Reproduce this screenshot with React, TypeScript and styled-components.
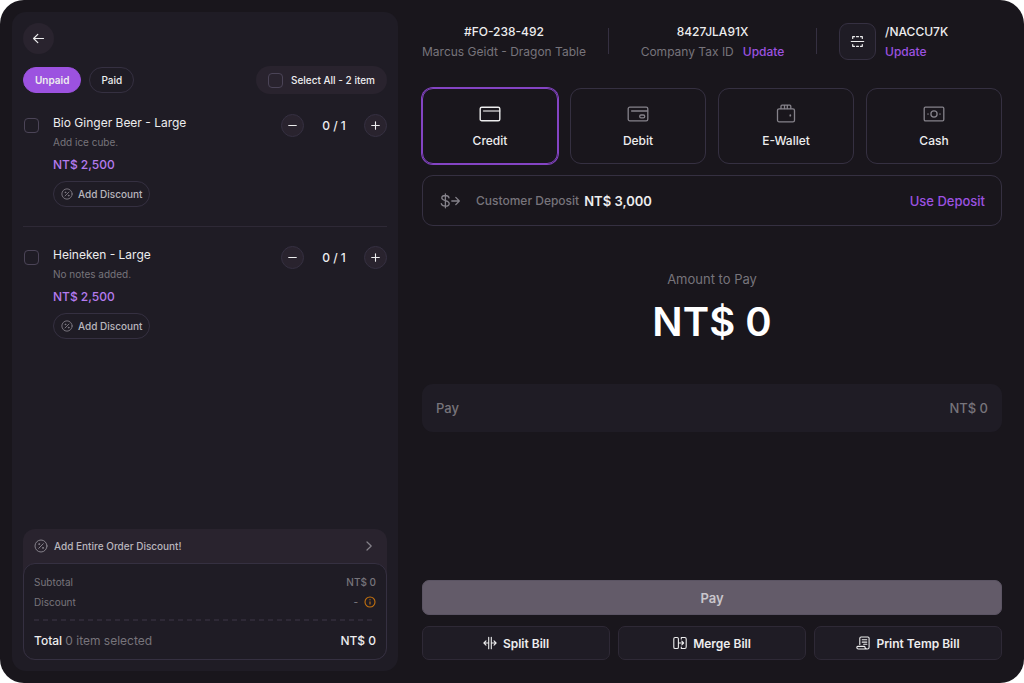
import React, { useState } from "react";
import styled, { createGlobalStyle, css } from "styled-components";

const color = {
  page: "#19161c",
  panel: "#1f1c25",
  raised: "#29232e",
  line: "#353041",
  lineSoft: "#2e2936",
  purple: "#9c52e0",
  purpleDeep: "#8444c4",
  lilac: "#b57bed",
  text: "#ededee",
  soft: "#b9b6bd",
  muted: "#77747b",
  icon: "#85828a",
  amber: "#c5720f",
};

const GlobalStyle = createGlobalStyle`
  *, *::before, *::after { box-sizing: border-box; }
  body { margin: 0; background: #fff; }
  body, button, input { font-family: Inter, "Liberation Sans", sans-serif; }
  button { margin: 0; padding: 0; border: 0; background: none; color: inherit; cursor: pointer; }
  h1, h2, p, ul, dl, dd { margin: 0; padding: 0; font-weight: 400; }
  ul { list-style: none; }
`;

const Screen = styled.div`
  display: grid;
  grid-template-columns: 386fr 580fr;
  gap: 24px;
  min-height: 100vh;
  padding: 12px 22px 12px 12px;
  border-radius: 24px;
  background: ${color.page};
  color: ${color.text};
  font-size: 12px;
  line-height: 16px;
`;

const OrderPanel = styled.section`
  display: flex;
  flex-direction: column;
  min-width: 0;
  padding: 11px;
  border-radius: 14px;
  background: ${color.panel};
`;

const BackButton = styled.button`
  display: grid;
  place-items: center;
  width: 31px;
  height: 31px;
  border-radius: 50%;
  background: ${color.raised};
`;

const FilterRow = styled.div`
  display: flex;
  align-items: center;
  gap: 8px;
  margin-top: 12px;
`;

const FilterTab = styled.button<{ $active?: boolean }>`
  height: 26px;
  padding: 0 11px;
  border: 1px solid ${(p) => (p.$active ? color.purple : color.line)};
  border-radius: 13px;
  background: ${(p) => (p.$active ? color.purple : "transparent")};
  color: ${color.text};
  font-size: 10px;
  font-weight: ${(p) => (p.$active ? 600 : 500)};
`;

const SelectAll = styled.label`
  display: flex;
  align-items: center;
  gap: 8px;
  height: 28px;
  margin-left: auto;
  padding: 0 12px;
  border-radius: 14px;
  background: ${color.raised};
  font-size: 10px;
  font-weight: 500;
`;

const Checkbox = styled.input.attrs({ type: "checkbox" })`
  appearance: none;
  flex: none;
  width: 15px;
  height: 15px;
  margin: 0;
  border: 1px solid #4b4457;
  border-radius: 4px;
  &:checked { background: ${color.purple}; }
`;

const Items = styled.ul`
  display: flex;
  flex-direction: column;
  margin-top: 20px;
`;

const Item = styled.li`
  display: grid;
  grid-template-columns: 16px 1fr auto;
  column-gap: 14px;
  align-items: start;
  & + & {
    margin-top: 19px;
    padding-top: 19px;
    border-top: 1px solid ${color.lineSoft};
  }
`;

const ItemCheck = styled(Checkbox)`
  margin: 4px 0 0 1px;
`;

const ItemInfo = styled.div`
  display: flex;
  flex-direction: column;
  align-items: flex-start;
`;

const ItemName = styled.label`
  line-height: 18px;
`;

const ItemNote = styled.p`
  margin-top: 2px;
  color: ${color.muted};
  font-size: 10px;
`;

const ItemPrice = styled.p`
  margin-top: 7px;
  color: ${color.lilac};
  font-weight: 500;
`;

const DiscountButton = styled.button`
  display: flex;
  align-items: center;
  gap: 5px;
  height: 26px;
  margin-top: 8px;
  padding: 0 7px;
  border: 1px solid ${color.line};
  border-radius: 13px;
  color: ${color.soft};
  font-size: 10px;
  font-weight: 500;
`;

const Stepper = styled.div`
  display: grid;
  grid-template-columns: 23px 60px 23px;
  align-items: center;
  justify-items: center;
  font-weight: 500;
`;

const StepButton = styled.button`
  display: grid;
  place-items: center;
  width: 23px;
  height: 23px;
  border: 1px solid ${color.line};
  border-radius: 50%;
  background: ${color.raised};
`;

const Summary = styled.div`
  margin-top: auto;
  border-radius: 12px;
  background: ${color.raised};
`;

const OrderDiscount = styled.button`
  display: flex;
  align-items: center;
  gap: 6px;
  width: 100%;
  height: 34px;
  padding: 0 12px 0 11px;
  color: ${color.soft};
  font-size: 10px;
  font-weight: 500;
  & > svg:last-child { margin-left: auto; color: ${color.icon}; }
`;

const Totals = styled.dl`
  padding: 10px;
  border: 1px solid ${color.line};
  border-radius: 12px;
  background: ${color.panel};
`;

const TotalRow = styled.div<{ $grand?: boolean }>`
  display: flex;
  align-items: center;
  justify-content: space-between;
  color: ${(p) => (p.$grand ? color.text : color.muted)};
  font-size: ${(p) => (p.$grand ? "12px" : "10px")};
  font-weight: ${(p) => (p.$grand ? 500 : 400)};
  & + & { margin-top: 4px; }
  dd { display: flex; align-items: center; gap: 6px; font-weight: 500; }
`;

const Muted = styled.span`
  color: ${color.muted};
  font-weight: 400;
`;

const Dashes = styled.div`
  height: 2px;
  margin: 9px 0 12px;
  background: repeating-linear-gradient(90deg, ${color.lineSoft} 0 5px, transparent 5px 9px);
`;

const PaymentPanel = styled.main`
  display: flex;
  flex-direction: column;
  min-width: 0;
  padding: 11px 0;
`;

const Facts = styled.header`
  display: grid;
  grid-template-columns: 186fr 209fr 185fr;
  align-items: center;
`;

const Fact = styled.div`
  display: flex;
  align-items: center;
  height: 37px;
`;

const MiddleFact = styled(Fact)`
  position: relative;
  justify-content: center;
  &::before, &::after {
    content: "";
    position: absolute;
    top: 5px;
    width: 1px;
    height: 26px;
    background: ${color.line};
  }
  &::before { left: 0; }
  &::after { right: 0; }
`;

const LastFact = styled(Fact)`
  gap: 9px;
  padding-left: 22px;
`;

const FactText = styled.div<{ $start?: boolean }>`
  display: flex;
  flex-direction: column;
  gap: 4px;
  text-align: ${(p) => (p.$start ? "left" : "center")};
  white-space: nowrap;
`;

const FactTitle = styled.p`
  font-weight: 500;
`;

const FactLine = styled.p`
  display: flex;
  gap: 9px;
  color: ${color.muted};
`;

const TextLink = styled.a`
  color: ${color.purple};
  font-weight: 500;
  text-decoration: none;
`;

const ScanButton = styled.button`
  display: grid;
  place-items: center;
  width: 37px;
  height: 37px;
  border: 1px solid ${color.line};
  border-radius: 9px;
  background: ${color.panel};
`;

const Methods = styled.div`
  display: grid;
  grid-template-columns: repeat(4, 1fr);
  gap: 12px;
  margin-top: 28px;
`;

const Method = styled.button<{ $active?: boolean }>`
  display: flex;
  flex-direction: column;
  align-items: center;
  justify-content: center;
  gap: 8px;
  height: 76px;
  border: 1px solid ${color.line};
  border-radius: 11px;
  color: ${color.text};
  font-size: 12px;
  font-weight: 500;
  line-height: 16px;
  svg { color: ${color.icon}; }
  ${(p) =>
    p.$active &&
    css`
      border-color: ${color.purpleDeep};
      box-shadow: 0 0 0 1px ${color.purpleDeep};
      svg { color: ${color.text}; }
    `}
`;

const Deposit = styled.div`
  display: flex;
  align-items: center;
  height: 51px;
  margin-top: 11px;
  padding: 0 16px 0 17px;
  border: 1px solid ${color.line};
  border-radius: 11px;
  & > svg { color: ${color.icon}; }
`;

const DepositLabel = styled.span`
  margin: 0 5px 0 14px;
  color: ${color.muted};
  font-weight: 500;
`;

const DepositValue = styled.span`
  font-size: 13px;
  font-weight: 600;
`;

const DepositAction = styled.button`
  margin-left: auto;
  color: ${color.purple};
  font-size: 13px;
  font-weight: 500;
`;

const Amount = styled.div`
  margin-top: 45px;
  color: ${color.muted};
  font-size: 13px;
  text-align: center;
`;

const AmountValue = styled.p`
  margin-top: 10px;
  color: #fff;
  font-size: 40px;
  font-weight: 600;
  line-height: 50px;
`;

const PayField = styled.label`
  display: flex;
  align-items: center;
  justify-content: space-between;
  height: 48px;
  margin-top: 37px;
  padding: 0 14px;
  border-radius: 11px;
  background: ${color.panel};
  color: ${color.muted};
  font-size: 13px;
  font-weight: 500;
`;

const PayInput = styled.input`
  flex: 1;
  min-width: 0;
  padding: 0;
  border: 0;
  outline: 0;
  background: none;
  color: inherit;
  font-size: 13px;
  font-weight: 500;
  text-align: right;
`;

const PayButton = styled.button`
  height: 35px;
  margin-top: auto;
  border: 1px solid #5b5463;
  border-radius: 7px;
  background: #635b69;
  color: #c9c6cc;
  font-size: 13px;
  font-weight: 600;
`;

const BillActions = styled.div`
  display: grid;
  grid-template-columns: repeat(3, 1fr);
  gap: 8px;
  margin-top: 11px;
`;

const BillButton = styled.button`
  display: flex;
  align-items: center;
  justify-content: center;
  gap: 6px;
  height: 34px;
  border: 1px solid ${color.lineSoft};
  border-radius: 7px;
  background: ${color.panel};
  color: ${color.text};
  font-size: 12px;
  font-weight: 600;
`;

type IconProps = { w: number; h?: number; stroke?: number; children: React.ReactNode };

const Icon = ({ w, h = w, stroke = 1.1, children }: IconProps) => (
  <svg
    width={w}
    height={h}
    viewBox={`0 0 ${w} ${h}`}
    fill="none"
    stroke="currentColor"
    strokeWidth={stroke}
    strokeLinecap="round"
    strokeLinejoin="round"
    aria-hidden="true"
  >
    {children}
  </svg>
);

const BackIcon = () => (
  <Icon w={13} stroke={1.2}>
    <path d="M11.500 6.500H1.800M5.800 2.300 1.600 6.500l4.200 4.200" />
  </Icon>
);
const PercentIcon = ({ size }: { size: number }) => (
  <svg width={size} height={size} viewBox="0 0 14 14" fill="none" stroke="#85818a" strokeWidth="1" strokeLinecap="round" aria-hidden="true">
    <circle cx="7" cy="7" r="6" />
    <path d="M9.3 4.7 4.7 9.3" />
    <circle cx="5.1" cy="5.1" r=".5" />
    <circle cx="8.9" cy="8.9" r=".5" />
  </svg>
);
const MinusIcon = () => (
  <Icon w={9}><path d="M.7 4.500h7.600" /></Icon>
);
const PlusIcon = () => (
  <Icon w={9}><path d="M.7 4.500h7.600M4.500.7v7.600" /></Icon>
);
const ChevronIcon = () => (
  <Icon w={12} stroke={1.2}><path d="m4 2 4.200 4L4 10" /></Icon>
);
const InfoIcon = () => (
  <svg width="12" height="12" viewBox="0 0 12 12" fill="none" stroke={color.amber} strokeWidth="1.1" aria-hidden="true">
    <circle cx="6" cy="6" r="5" />
    <path d="M6 5.4v3.1M6 3.3v1" />
  </svg>
);
const ScanIcon = () => (
  <Icon w={15} stroke={1.2}>
    <path d="M1.300 7.500h12.400M2.700 4.500V2.700H4.500M6.500 2.700h2M10.500 2.700h1.800V4.500M2.700 10.500v1.800H4.500M6.500 12.300h2M10.500 12.300h1.800V10.500" />
  </Icon>
);
const CreditIcon = () => (
  <Icon w={22} stroke={1.4}>
    <rect x="1.2" y="4.2" width="19.6" height="13.6" rx="1.6" />
    <path d="M4.6 8h16" strokeWidth="1.6" strokeOpacity=".75" />
  </Icon>
);
const DebitIcon = () => (
  <Icon w={22} stroke={1.3}>
    <rect x="1.2" y="4.2" width="19.6" height="13.6" rx="1.6" />
    <path d="M4.6 8h16" />
    <rect x="12.7" y="12" width="5" height="2.8" rx="1.3" />
  </Icon>
);
const WalletIcon = () => (
  <Icon w={22} stroke={1.3}>
    <rect x="2.500" y="5.800" width="17" height="13" rx="1.600" />
    <path d="M6 5.600V3.200c0-.6.4-1 1-1h7.800c.6 0 1 .4 1 1v2.400M9.500 2.400v3.200M12.300 2.400v3.200" />
    <path d="M15.300 12.100v.6" strokeWidth="1.7" />
  </Icon>
);
const CashIcon = () => (
  <Icon w={22} stroke={1.3}>
    <rect x="1.2" y="4.2" width="19.6" height="13.6" rx="1.2" />
    <circle cx="11" cy="11" r="3.1" />
    <path d="M5 10.8v.4M17 10.8v.4" />
  </Icon>
);
const DepositIcon = () => (
  <Icon w={22} h={18} stroke={1.3}>
    <path d="M9 5.800C8.700 4.300 7.400 3.500 5.300 3.500 3.200 3.500 1.800 4.500 1.800 6.100 1.800 9.500 9.200 7.600 9.200 11.500 9.200 13.200 7.700 14.200 5.400 14.200 3.100 14.200 1.600 13.300 1.300 11.700M5.400 2v13.800M11.800 9h7.400M15.800 5.400 19.300 9l-3.500 3.600" />
  </Icon>
);
const SplitIcon = () => (
  <Icon w={14}>
    <path d="M5.700 1.300v11.400M8.300 1.300v11.400M5.500 7H1.200M3 4.900.9 7 3 9.100M8.500 7h4.300M11 4.900 13.100 7 11 9.100" />
  </Icon>
);
const MergeIcon = () => (
  <Icon w={14}>
    <rect x=".8" y="1.500" width="4.600" height="11" rx="1.300" />
    <path d="M8.300 1.500h3.500c.8 0 1.400.6 1.400 1.400v8.200c0 .8-.6 1.400-1.400 1.400H8.300M8.300 1.500v1.500M8.300 12.500v-1.500M5.600 7H10.500M8.800 5.200 10.600 7 8.800 8.800" />
  </Icon>
);
const ReceiptIcon = () => (
  <Icon w={14}>
    <path d="M3.800 8.500V2.300c0-.8.500-1.300 1.300-1.300h6.800c.7 0 1.200.5 1.200 1.200v9c0 1-.7 1.800-1.700 1.800H2.500c-1 0-1.700-.7-1.700-1.600 0-.6.400-1 1-1h6.400c.5 0 .8.400.8.900 0 1 .8 1.700 2.200 1.700M6.200 3.700h4.600M6.200 6.100h4.600M7.700 8.300h3.100" />
  </Icon>
);

const items = [
  { id: "ginger", name: "Bio Ginger Beer - Large", note: "Add ice cube.", price: "NT$ 2,500" },
  { id: "heineken", name: "Heineken - Large", note: "No notes added.", price: "NT$ 2,500" },
];

const methods = [
  { name: "Credit", icon: <CreditIcon /> },
  { name: "Debit", icon: <DebitIcon /> },
  { name: "E-Wallet", icon: <WalletIcon /> },
  { name: "Cash", icon: <CashIcon /> },
];

export default function App() {
  const [method, setMethod] = useState("Credit");
  const [pay, setPay] = useState("NT$ 0");

  return (
    <>
      <GlobalStyle />
      <Screen>
        <OrderPanel>
          <BackButton aria-label="Back"><BackIcon /></BackButton>
          <FilterRow>
            <FilterTab $active>Unpaid</FilterTab>
            <FilterTab>Paid</FilterTab>
            <SelectAll>
              <Checkbox />
              Select All - 2 item
            </SelectAll>
          </FilterRow>
          <Items>
            {items.map((item) => (
              <Item key={item.id}>
                <ItemCheck id={item.id} />
                <ItemInfo>
                  <ItemName htmlFor={item.id}>{item.name}</ItemName>
                  <ItemNote>{item.note}</ItemNote>
                  <ItemPrice>{item.price}</ItemPrice>
                  <DiscountButton>
                    <PercentIcon size={12} />
                    Add Discount
                  </DiscountButton>
                </ItemInfo>
                <Stepper>
                  <StepButton aria-label="Decrease"><MinusIcon /></StepButton>
                  <span>0 / 1</span>
                  <StepButton aria-label="Increase"><PlusIcon /></StepButton>
                </Stepper>
              </Item>
            ))}
          </Items>
          <Summary>
            <OrderDiscount>
              <PercentIcon size={14} />
              Add Entire Order Discount!
              <ChevronIcon />
            </OrderDiscount>
            <Totals>
              <TotalRow>
                <dt>Subtotal</dt>
                <dd>NT$ 0</dd>
              </TotalRow>
              <TotalRow>
                <dt>Discount</dt>
                <dd>- <InfoIcon /></dd>
              </TotalRow>
              <Dashes />
              <TotalRow $grand>
                <dt>Total <Muted>0 item selected</Muted></dt>
                <dd>NT$ 0</dd>
              </TotalRow>
            </Totals>
          </Summary>
        </OrderPanel>

        <PaymentPanel>
          <Facts>
            <Fact>
              <FactText>
                <FactTitle>#FO-238-492</FactTitle>
                <FactLine>Marcus Geidt - Dragon Table</FactLine>
              </FactText>
            </Fact>
            <MiddleFact>
              <FactText>
                <FactTitle>8427JLA91X</FactTitle>
                <FactLine>
                  Company Tax ID <TextLink href="#tax">Update</TextLink>
                </FactLine>
              </FactText>
            </MiddleFact>
            <LastFact>
              <ScanButton aria-label="Scan"><ScanIcon /></ScanButton>
              <FactText $start>
                <FactTitle>/NACCU7K</FactTitle>
                <FactLine><TextLink href="#carrier">Update</TextLink></FactLine>
              </FactText>
            </LastFact>
          </Facts>

          <Methods>
            {methods.map((m) => (
              <Method key={m.name} $active={m.name === method} onClick={() => setMethod(m.name)}>
                {m.icon}
                {m.name}
              </Method>
            ))}
          </Methods>

          <Deposit>
            <DepositIcon />
            <DepositLabel>Customer Deposit</DepositLabel>
            <DepositValue>NT$ 3,000</DepositValue>
            <DepositAction>Use Deposit</DepositAction>
          </Deposit>

          <Amount>
            Amount to Pay
            <AmountValue>NT$ 0</AmountValue>
          </Amount>

          <PayField>
            Pay
            <PayInput value={pay} onChange={(e) => setPay(e.target.value)} />
          </PayField>

          <PayButton>Pay</PayButton>
          <BillActions>
            <BillButton><SplitIcon />Split Bill</BillButton>
            <BillButton><MergeIcon />Merge Bill</BillButton>
            <BillButton><ReceiptIcon />Print Temp Bill</BillButton>
          </BillActions>
        </PaymentPanel>
      </Screen>
    </>
  );
}
